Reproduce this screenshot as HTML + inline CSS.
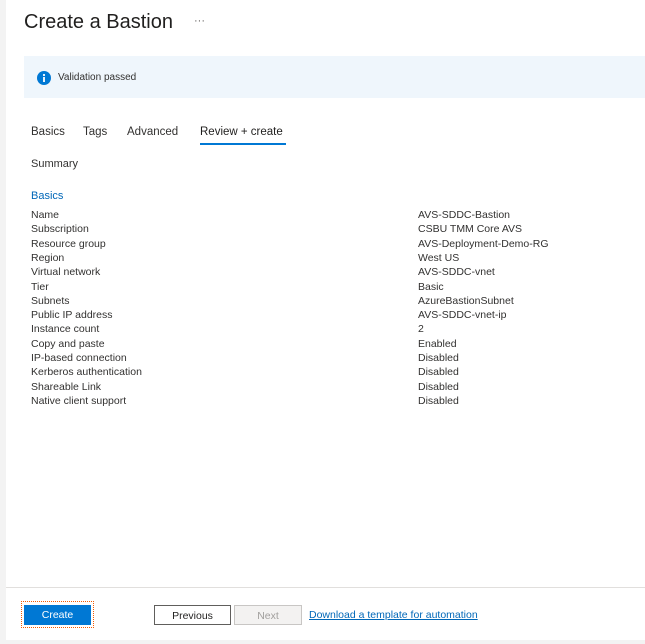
<!DOCTYPE html>
<html><head><style>
body{margin:0;width:645px;height:644px;background:#fff;font-family:"Liberation Sans",sans-serif;color:#323130;position:relative;overflow:hidden}
.strip{position:absolute;left:0;top:0;width:6px;height:644px;background:#f3f3f3}
.a{position:absolute;white-space:nowrap}
.row{position:absolute;left:31px;font-size:10.5px;height:14.3px;line-height:14.3px}
.v{position:absolute;left:418px;font-size:10.5px;line-height:14.3px}
.btn{position:absolute;top:605px;height:20px;font-size:10.5px;line-height:20px;text-align:center;box-sizing:border-box}
</style></head><body>
<div class="strip"></div>
<div class="a" style="left:24px;top:11px;font-size:20px;color:#201f1e">Create a Bastion</div>
<div class="a" style="left:194px;top:15px;font-size:11px;color:#605e5c">···</div>
<div class="a" style="left:24px;top:56px;width:621px;height:42px;background:#eff6fc"></div>
<svg class="a" style="left:37px;top:71px" width="14" height="14" viewBox="0 0 14 14"><circle cx="7" cy="7" r="7" fill="#0078d4"/><rect x="6.1" y="6" width="1.8" height="5" fill="#fff"/><circle cx="7" cy="4" r="1.1" fill="#fff"/></svg>
<div class="a" style="left:58px;top:72px;font-size:10px">Validation passed</div>
<div class="a" style="left:31px;top:126px;font-size:11.5px">Basics</div>
<div class="a" style="left:83px;top:126px;font-size:11.5px">Tags</div>
<div class="a" style="left:127px;top:126px;font-size:11.5px">Advanced</div>
<div class="a" style="left:200px;top:126px;font-size:11.5px;color:#201f1e">Review + create</div>
<div class="a" style="left:200px;top:143px;width:86px;height:2px;background:#0078d4"></div>
<div class="a" style="left:31px;top:158px;font-size:11px">Summary</div>
<div class="a" style="left:31px;top:190px;font-size:11px;color:#0067b8">Basics</div>
<div class="row" style="top:208px">Name</div><div class="v" style="top:208px">AVS-SDDC-Bastion</div>
<div class="row" style="top:222.3px">Subscription</div><div class="v" style="top:222.3px">CSBU TMM Core AVS</div>
<div class="row" style="top:236.6px">Resource group</div><div class="v" style="top:236.6px">AVS-Deployment-Demo-RG</div>
<div class="row" style="top:250.9px">Region</div><div class="v" style="top:250.9px">West US</div>
<div class="row" style="top:265.2px">Virtual network</div><div class="v" style="top:265.2px">AVS-SDDC-vnet</div>
<div class="row" style="top:279.5px">Tier</div><div class="v" style="top:279.5px">Basic</div>
<div class="row" style="top:293.8px">Subnets</div><div class="v" style="top:293.8px">AzureBastionSubnet</div>
<div class="row" style="top:308.1px">Public IP address</div><div class="v" style="top:308.1px">AVS-SDDC-vnet-ip</div>
<div class="row" style="top:322.4px">Instance count</div><div class="v" style="top:322.4px">2</div>
<div class="row" style="top:336.7px">Copy and paste</div><div class="v" style="top:336.7px">Enabled</div>
<div class="row" style="top:351px">IP-based connection</div><div class="v" style="top:351px">Disabled</div>
<div class="row" style="top:365.3px">Kerberos authentication</div><div class="v" style="top:365.3px">Disabled</div>
<div class="row" style="top:379.6px">Shareable Link</div><div class="v" style="top:379.6px">Disabled</div>
<div class="row" style="top:393.9px">Native client support</div><div class="v" style="top:393.9px">Disabled</div>
<div class="a" style="left:6px;top:587px;width:639px;height:1px;background:#e1dfdd"></div>
<div class="a" style="left:6px;top:640px;width:639px;height:4px;background:#f3f3f3"></div>
<div class="a" style="left:21px;top:601px;width:71px;height:25px;border:1px dotted #f25c05"></div>
<div class="btn" style="left:24px;width:67px;background:#0078d4;color:#fff;top:605px">Create</div>
<div class="btn" style="left:154px;width:77px;border:1px solid #605e5c;color:#201f1e">Previous</div>
<div class="btn" style="left:234px;width:68px;border:1px solid #c8c6c4;background:#f3f2f1;color:#a19f9d">Next</div>
<div class="a" style="left:309px;top:609px;font-size:10.5px;color:#0067b8;text-decoration:underline">Download a template for automation</div>
</body></html>
